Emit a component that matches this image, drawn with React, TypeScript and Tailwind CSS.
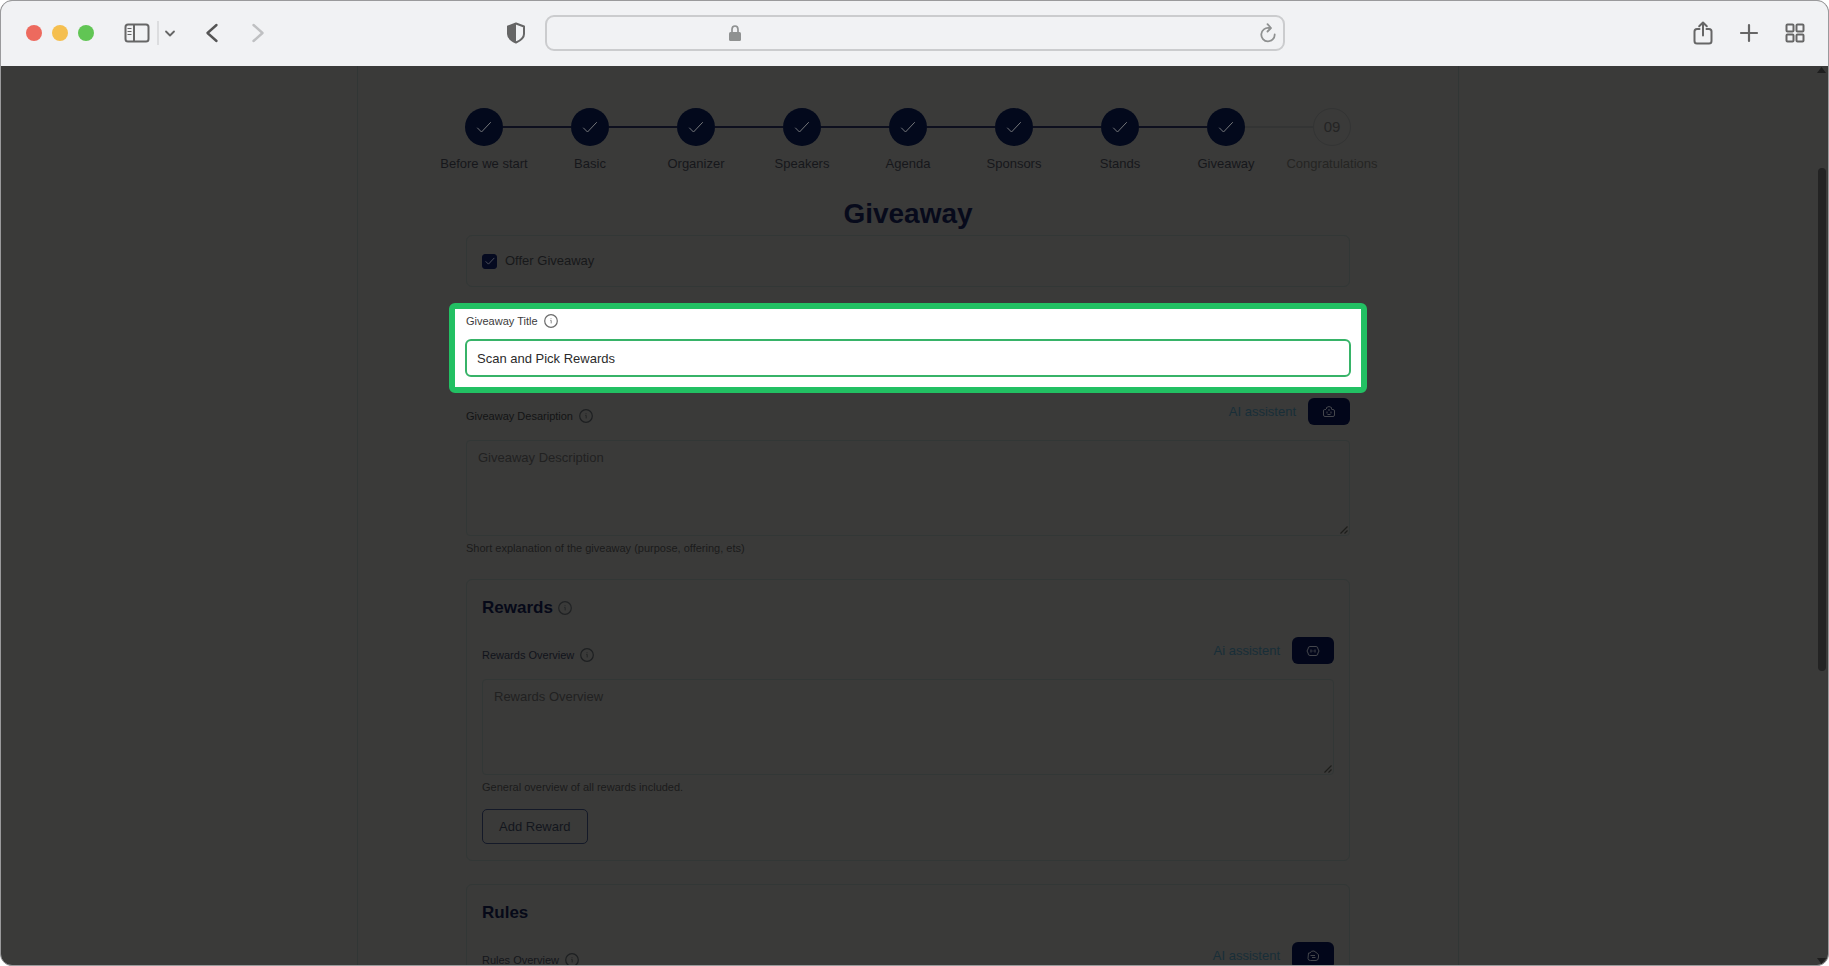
import { useState } from 'react'
import type { ReactNode } from 'react'

const STEPS = [
  'Before we start',
  'Basic',
  'Organizer',
  'Speakers',
  'Agenda',
  'Sponsors',
  'Stands',
  'Giveaway',
  'Congratulations',
]
const CURRENT = 8

const Check = ({ className }: { className: string }) => (
  <svg viewBox="0 0 16 16" fill="none" stroke="currentColor" strokeLinecap="round" strokeLinejoin="round" className={className}>
    <path d="M1.5 9 5.5 13 14.5 3.5" />
  </svg>
)

const Info = ({ className }: { className: string }) => (
  <svg viewBox="0 0 14 14" fill="none" stroke="currentColor" className={`h-3.5 w-3.5 shrink-0 ${className}`}>
    <circle cx="7" cy="7" r="6.3" strokeWidth="1.2" />
    <path d="M6.3 6.4H7.2V9.4M7 4.3V5.1" strokeWidth="0.8" />
  </svg>
)

const botPaths = {
  bump: 'M4 4.5H2.5Q1.5 4.5 1.5 6V10Q1.5 11.5 3 11.5H11Q12.5 11.5 12.5 10V6Q12.5 4.5 11 4.5H10M4.5 4V2.5Q7 .5 9.5 2.5V4.5M5 6.5V8.5M9 6.5V8.5M5.5 9.5H8.5M6 5H8',
  wide: 'M4 2.5H10Q12 2.5 12 5L13 7 12 9Q12 11.5 10 11.5H4Q2 11.5 2 9L1 7 2 5Q2 2.5 4 2.5ZM5 5.5V8.5M9 5.5V8.5M6.5 7H7.5',
  round: 'M2.5 4H4Q5 1.5 8 2L11.5 4.5Q13 5.5 12.5 8 12.5 11.5 10 11.5H4.500Q2 11.500 2 9.500ZM4.500 6.500H9M6 8.500H9.500',
}

type FieldProps = {
  id: string
  label: string
  assist: string
  bot: keyof typeof botPaths
  placeholder: string
  help: string
  labelColor: string
}

const AiField = ({ id, label, assist, bot, placeholder, help, labelColor }: FieldProps) => {
  const [value, setValue] = useState<string>('')

  return (
    <div>
      <div className="flex items-center justify-between">
        <div className={`flex items-center gap-1.5 pt-2 text-[11px] leading-4 ${labelColor}`}>
          <label htmlFor={id}>{label}</label>
          <Info className="text-[#1d1f21]" />
        </div>
        <div className="flex items-center gap-3">
          <span className="text-[13px] leading-4 text-[#182e38]">{assist}</span>
          <button
            type="button"
            aria-label={`${assist} ${placeholder}`}
            className="flex h-[27px] w-[42px] items-center justify-center rounded-md bg-[#02061a] text-[#44464c]"
          >
            <svg viewBox="0 0 14 14" fill="none" stroke="currentColor" className="h-3.5 w-3.5">
              <path d={botPaths[bot]} />
            </svg>
          </button>
        </div>
      </div>
      <div className="relative mt-[15px]">
        <textarea
          id={id}
          value={value}
          onChange={(e) => setValue(e.target.value)}
          placeholder={placeholder}
          className="block h-24 w-full resize-none rounded border border-[#323736] bg-transparent px-[11px] py-2 text-[13px] leading-[18px] outline-none placeholder:text-[#212121]"
        />
        <svg viewBox="0 0 8 8" stroke="#1d1d1b" strokeWidth="1.2" className="absolute right-0.5 bottom-0.5 h-2 w-2">
          <path d="M.5 7.5 7.5.5M4.5 7.5 7.5 4.5" />
        </svg>
      </div>
      <p className="mt-1 text-[11px] leading-4 text-[#1b1b1b]">{help}</p>
    </div>
  )
}

const Card = ({ title, info, children }: { title: string; info?: boolean; children: ReactNode }) => (
  <section className="mt-[23px] rounded-md border border-[#323736] px-[15px] py-4">
    <div className="mb-[17px] flex items-center gap-[5px]">
      <h2 className="text-[17px] leading-6 font-bold text-[#060918]">{title}</h2>
      {info && <Info className="text-[#202224]" />}
    </div>
    {children}
  </section>
)

const Toolbar = () => (
  <header className="grid h-[65px] shrink-0 grid-cols-[1fr_minmax(0,740px)_1fr] items-center bg-[#f1f2f4] pb-2 pt-1.5 text-[#666666]">
    <div className="flex items-center pr-[19px] pl-[25px]">
      <div className="flex gap-2.5">
        <span className="h-4 w-4 rounded-full bg-[#ed6a5e]" />
        <span className="h-4 w-4 rounded-full bg-[#f5bf4f]" />
        <span className="h-4 w-4 rounded-full bg-[#61c554]" />
      </div>
      <button type="button" aria-label="Sidebar" className="ml-[30px]">
        <svg viewBox="0 0 26 20" fill="none" stroke="currentColor" strokeWidth="2" className="h-5 w-[26px]">
          <rect x="1.5" y="1.5" width="23" height="17" rx="2.5" />
          <path d="M10 1.5V18.5" />
          <path d="M3.5 5.5H7.5M3.5 8.5H7.5M3.5 11.5H7.5" strokeWidth="1.2" />
        </svg>
      </button>
      <span className="ml-[7px] h-6 w-0.5 bg-[#dcdddf]" />
      <button type="button" aria-label="Tab groups" className="ml-[5px]">
        <svg viewBox="0 0 12 12" fill="none" stroke="currentColor" strokeWidth="1.8" strokeLinecap="round" strokeLinejoin="round" className="h-3 w-3">
          <path d="M2 4.5 6 8.5 10 4.5" />
        </svg>
      </button>
      <button type="button" aria-label="Back" className="ml-7 text-[#555555]">
        <svg viewBox="0 0 16 20" fill="none" stroke="currentColor" strokeWidth="2.4" strokeLinecap="round" strokeLinejoin="round" className="h-5 w-4">
          <path d="M12.5 2 3.5 10 12.5 18" />
        </svg>
      </button>
      <button type="button" aria-label="Forward" className="ml-[30px] text-[#bfc0c2]">
        <svg viewBox="0 0 16 20" fill="none" stroke="currentColor" strokeWidth="2.4" strokeLinecap="round" strokeLinejoin="round" className="h-5 w-4">
          <path d="M3.5 2 12.5 10 3.5 18" />
        </svg>
      </button>
      <button type="button" aria-label="Privacy report" className="ml-auto">
        <svg viewBox="0 0 20 22" className="h-[22px] w-5">
          <path d="M10 1.5 18 4.5V12Q18 17 10 20.5 2 17 2 12V4.5Z" fill="none" stroke="currentColor" strokeWidth="2" strokeLinejoin="round" />
          <path d="M10 1.5V20.5Q2 17 2 12V4.5Z" fill="currentColor" />
        </svg>
      </button>
    </div>
    <div className="flex h-9 items-center rounded-[9px] border-2 border-[#cbccce] pr-1.5 pl-[24.6%] text-[#8f9191]">
      <svg viewBox="0 0 12 16" className="h-4 w-3 shrink-0">
        <rect x="0" y="7" width="12" height="9" rx="1.5" fill="currentColor" />
        <path d="M3 8V4.5Q3 1 6 1 9 1 9 4.5V8" fill="none" stroke="currentColor" strokeWidth="1.7" />
      </svg>
      <input type="text" aria-label="Address" className="h-7 min-w-0 flex-1 bg-transparent px-2 text-[13px] outline-none" />
      <button type="button" aria-label="Reload">
        <svg viewBox="0 0 18 20" fill="none" stroke="currentColor" strokeWidth="1.8" strokeLinecap="round" strokeLinejoin="round" className="h-5 w-[18px]">
          <path d="M10 5A6.7 6.7 0 1 0 15.7 11.5M8.5 1.2 12 5 8.5 8.5" />
        </svg>
      </button>
    </div>
    <div className="flex items-center justify-end gap-[26px] pr-[23px]">
      <button type="button" aria-label="Share">
        <svg viewBox="0 0 20 24" fill="none" stroke="currentColor" strokeWidth="2" strokeLinecap="round" strokeLinejoin="round" className="h-6 w-5">
          <path d="M6.5 8H4Q1.5 8 1.5 10.5V20Q1.5 22.5 4 22.5H16Q18.5 22.5 18.5 20V10.5Q18.5 8 16 8H13.5M10 14.5V1.8M6.2 5.2 10 1.5 13.8 5.2" />
        </svg>
      </button>
      <button type="button" aria-label="New tab">
        <svg viewBox="0 0 20 20" fill="none" stroke="currentColor" strokeWidth="2.2" strokeLinecap="round" className="h-5 w-5">
          <path d="M10 2V18M2 10H18" />
        </svg>
      </button>
      <button type="button" aria-label="Tab overview">
        <svg viewBox="0 0 20 20" fill="none" stroke="currentColor" strokeWidth="2" className="h-5 w-5">
          <rect x="1.5" y="1.5" width="7" height="7" rx="1" />
          <rect x="11.5" y="1.5" width="7" height="7" rx="1" />
          <rect x="1.5" y="11.5" width="7" height="7" rx="1" />
          <rect x="11.5" y="11.5" width="7" height="7" rx="1" />
        </svg>
      </button>
    </div>
  </header>
)

const Stepper = () => (
  <ol className="-mx-[35px] flex">
    {STEPS.map((step, i) => {
      const done = i < CURRENT
      return (
        <li key={step} className="flex min-w-0 flex-1 flex-col items-center">
          <div className="flex w-full items-center">
            <span
              className={`h-0.5 flex-1 ${i === 0 ? 'bg-transparent' : done ? 'bg-[#0d0f1e]' : 'bg-[#333434]'}`}
            />
            {done ? (
              <span className="flex h-[38px] w-[38px] items-center justify-center rounded-full bg-[#03091c] text-[#75777a]">
                <Check className="h-4 w-4" />
              </span>
            ) : (
              <span className="flex h-[38px] w-[38px] items-center justify-center rounded-full border border-[#333434] text-[15px] text-[#242424]">
                09
              </span>
            )}
            <span
              className={`h-0.5 flex-1 ${
                i === STEPS.length - 1 ? 'bg-transparent' : i < CURRENT - 1 ? 'bg-[#0d0f1e]' : 'bg-[#333434]'
              }`}
            />
          </div>
          <span className={`mt-2.5 text-[13px] leading-4 whitespace-nowrap ${done ? 'text-[#16171b]' : 'text-[#252523]'}`}>
            {step}
          </span>
        </li>
      )
    })}
  </ol>
)

const App = () => {
  const [offer, setOffer] = useState<boolean>(true)
  const [title, setTitle] = useState<string>('Scan and Pick Rewards')

  return (
    <div className="h-screen bg-white font-['Liberation_Sans',Arial,sans-serif]">
      <div className="flex h-full flex-col overflow-hidden rounded-xl border border-[#9a9a9c] bg-[#3a3a39]">
        <Toolbar />
        <div className="flex min-h-0 flex-1">
          <main className="min-w-0 flex-1 overflow-hidden">
            <div className="mx-auto min-h-full w-full max-w-[1102px] border-x border-[#313635] px-[108px] pt-[42px]">
              <Stepper />
              <h1 className="mt-[22px] text-center text-[28px] leading-10 font-bold text-[#070a1b]">Giveaway</h1>
              <div className="mt-px flex h-[52px] items-center rounded-md border border-[#323736] px-[15px]">
                <label className="flex items-center gap-2 text-[13px] leading-4 text-[#17181a]">
                  <span className="grid place-items-center">
                    <input
                      type="checkbox"
                      checked={offer}
                      onChange={(e) => setOffer(e.target.checked)}
                      className="col-start-1 row-start-1 h-[15px] w-[15px] appearance-none rounded-[3px] border border-[#050a20] checked:bg-[#050a20]"
                    />
                    {offer && <Check className="pointer-events-none col-start-1 row-start-1 h-2.5 w-2.5 text-[#77797d]" />}
                  </span>
                  Offer Giveaway
                </label>
              </div>

              <div className="-mx-[17px] mt-4 rounded-md border-[6px] border-[#22c063] bg-white px-2.5 pt-1 pb-2.5">
                <div className="flex items-center gap-1.5 pl-px text-[11px] leading-4 text-[#3c3c3c]">
                  <label htmlFor="title">Giveaway Title</label>
                  <Info className="text-[#6b6b6b]" />
                </div>
                <input
                  id="title"
                  type="text"
                  value={title}
                  onChange={(e) => setTitle(e.target.value)}
                  className="mt-2.5 block h-[38px] w-full rounded-md border-2 border-[#37b368] bg-white px-2.5 text-[13px] text-[#2b2b2b] outline-none"
                />
              </div>

              <div className="mt-[5px]">
                <AiField
                  id="description"
                  label="Giveaway Desaription"
                  assist="AI assistent"
                  bot="bump"
                  placeholder="Giveaway Description"
                  help="Short explanation of the giveaway (purpose, offering, ets)"
                  labelColor="text-[#131415]"
                />
              </div>

              <Card title="Rewards" info>
                <AiField
                  id="rewards"
                  label="Rewards Overview"
                  assist="Ai assistent"
                  bot="wide"
                  placeholder="Rewards Overview"
                  help="General overview of all rewards included."
                  labelColor="text-[#11131b]"
                />
                <button
                  type="button"
                  className="mt-3.5 block h-[35px] rounded-[5px] border border-[#141928] px-4 text-[13px] text-[#13161d]"
                >
                  Add Reward
                </button>
              </Card>

              <Card title="Rules">
                <AiField
                  id="rules"
                  label="Rules Overview"
                  assist="AI assistent"
                  bot="round"
                  placeholder="Rules Overview"
                  help="General overview of the rules."
                  labelColor="text-[#14161b]"
                />
              </Card>
            </div>
          </main>
          {/* scrollbar */}
          <div className="flex w-[13px] shrink-0 flex-col items-center">
            <svg viewBox="0 0 9 8" className="h-2 w-[9px] text-[#1e1e1e]">
              <path d="M4.5 1 9 7H0Z" fill="currentColor" />
            </svg>
            <span className="grow-[94]" />
            <span className="w-2 grow-[503] rounded-full bg-[#232323]" />
            <span className="grow-[286]" />
            <svg viewBox="0 0 9 8" className="h-2 w-[9px] text-[#1e1e1e]">
              <path d="M4.5 7 9 1H0Z" fill="currentColor" />
            </svg>
          </div>
        </div>
      </div>
    </div>
  )
}

export default App
